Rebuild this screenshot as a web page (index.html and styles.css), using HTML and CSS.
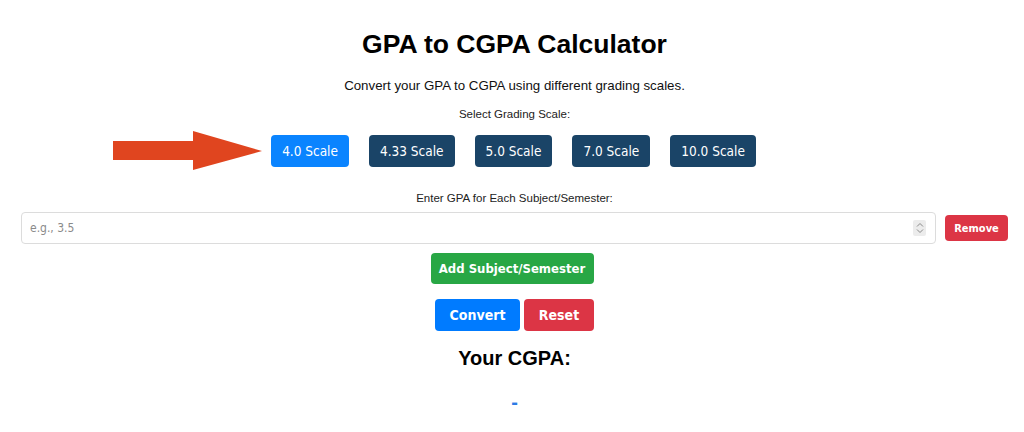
FILE: index.html
```html
<!DOCTYPE html>
<html lang="en">
<head>
<meta charset="utf-8">
<title>GPA to CGPA Calculator</title>
<link rel="stylesheet" href="styles.css">
</head>
<body>
<main class="calc">
  <h1 class="title">GPA to CGPA Calculator</h1>
  <p class="subtitle">Convert your GPA to CGPA using different grading scales.</p>
  <p class="label">Select Grading Scale:</p>
  <div class="scale-row">
    <svg class="arrow" width="150" height="40" viewBox="0 0 150 40" aria-hidden="true">
      <polygon points="0,10 80,10 80,0 149,20 80,39 80,29 0,29" fill="#e0451f"/>
    </svg>
    <div class="scales">
      <button class="scale active">4.0 Scale</button>
      <button class="scale">4.33 Scale</button>
      <button class="scale">5.0 Scale</button>
      <button class="scale">7.0 Scale</button>
      <button class="scale">10.0 Scale</button>
    </div>
  </div>
  <p class="label label-gpa">Enter GPA for Each Subject/Semester:</p>
  <div class="gpa-row">
    <div class="gpa-input">
      <span class="placeholder">e.g., 3.5</span>
      <span class="spinner">
        <svg width="10" height="14" viewBox="0 0 10 14" aria-hidden="true">
          <path d="M2 5.5 L5 2.5 L8 5.5 M2 8.5 L5 11.5 L8 8.5" fill="none" stroke="#8a8a8a" stroke-width="1"/>
        </svg>
      </span>
    </div>
    <button class="btn btn-remove">Remove</button>
  </div>
  <div class="center-row">
    <button class="btn btn-add">Add Subject/Semester</button>
  </div>
  <div class="center-row actions">
    <button class="btn btn-convert">Convert</button>
    <button class="btn btn-reset">Reset</button>
  </div>
  <h2 class="result-title">Your CGPA:</h2>
  <p class="result">-</p>
</main>
</body>
</html>
```

FILE: styles.css
```css
html, body {
  margin: 0;
  padding: 0;
  background: #ffffff;
}
body {
  font-family: "Liberation Sans", Arial, sans-serif;
  color: #111;
}
.calc {
  padding: 0 16px 0 21px;
  text-align: center;
}
.title {
  margin: 0;
  padding-top: 28px;
  font-size: 26.5px;
  line-height: 32px;
  font-weight: bold;
  color: #000;
}
.subtitle {
  margin: 17px 0 0;
  font-size: 13.3px;
  line-height: 18px;
  color: #111;
}
.label {
  margin: 11px 0 0;
  font-size: 11.5px;
  line-height: 16px;
  color: #222;
}
.scale-row {
  position: relative;
  margin-top: 13px;
  display: flex;
  justify-content: center;
}
.arrow {
  position: absolute;
  left: 92px;
  top: -4px;
}
.scales {
  display: flex;
  gap: 20px;
  margin-left: -2px;
}
.scale {
  height: 32px;
  padding: 0 11px;
  border: none;
  border-radius: 4px;
  background: #1a4467;
  color: #fff;
  font-family: "DejaVu Sans Condensed", "DejaVu Sans", sans-serif;
  font-size: 13.5px;
  cursor: pointer;
}
.scale.active {
  background: #0a84ff;
}
.label-gpa {
  margin-top: 23px;
}
.gpa-row {
  margin-top: 6px;
  display: flex;
  align-items: center;
  gap: 9px;
}
.gpa-input {
  flex: 1;
  height: 30px;
  border: 1px solid #dcdcdc;
  border-radius: 4px;
  display: flex;
  align-items: center;
  justify-content: space-between;
  padding: 0 8px 0 8px;
}
.placeholder {
  font-family: "DejaVu Sans Condensed", "DejaVu Sans", sans-serif;
  font-size: 12px;
  color: #8a8a8a;
}
.spinner {
  display: flex;
  align-items: center;
  justify-content: center;
  width: 13px;
  height: 16px;
  background: #ececec;
  border-radius: 2px;
  margin-right: 1px;
}
.btn {
  border: none;
  border-radius: 4px;
  color: #fff;
  font-family: "DejaVu Sans Condensed", "DejaVu Sans", sans-serif;
  font-weight: bold;
  cursor: pointer;
}
.btn-remove {
  width: 63px;
  height: 26px;
  padding: 0;
  background: #dc3545;
  font-size: 11px;
}
.center-row {
  display: flex;
  justify-content: center;
  margin-top: 9px;
}
.btn-add {
  width: 163px;
  height: 31px;
  background: #28a745;
  font-size: 13px;
  margin-left: -5px;
}
.actions {
  margin-top: 15px;
  gap: 4px;
}
.btn-convert {
  width: 85px;
  height: 32px;
  background: #007bff;
  font-size: 14px;
}
.btn-reset {
  width: 70px;
  height: 32px;
  background: #dc3545;
  font-size: 14px;
}
.result-title {
  margin: 15px 0 0;
  font-size: 20px;
  line-height: 24px;
  font-weight: bold;
  color: #000;
}
.result {
  margin: 20px 0 0;
  font-size: 20px;
  line-height: 24px;
  font-weight: bold;
  color: #2c7be5;
}
```
